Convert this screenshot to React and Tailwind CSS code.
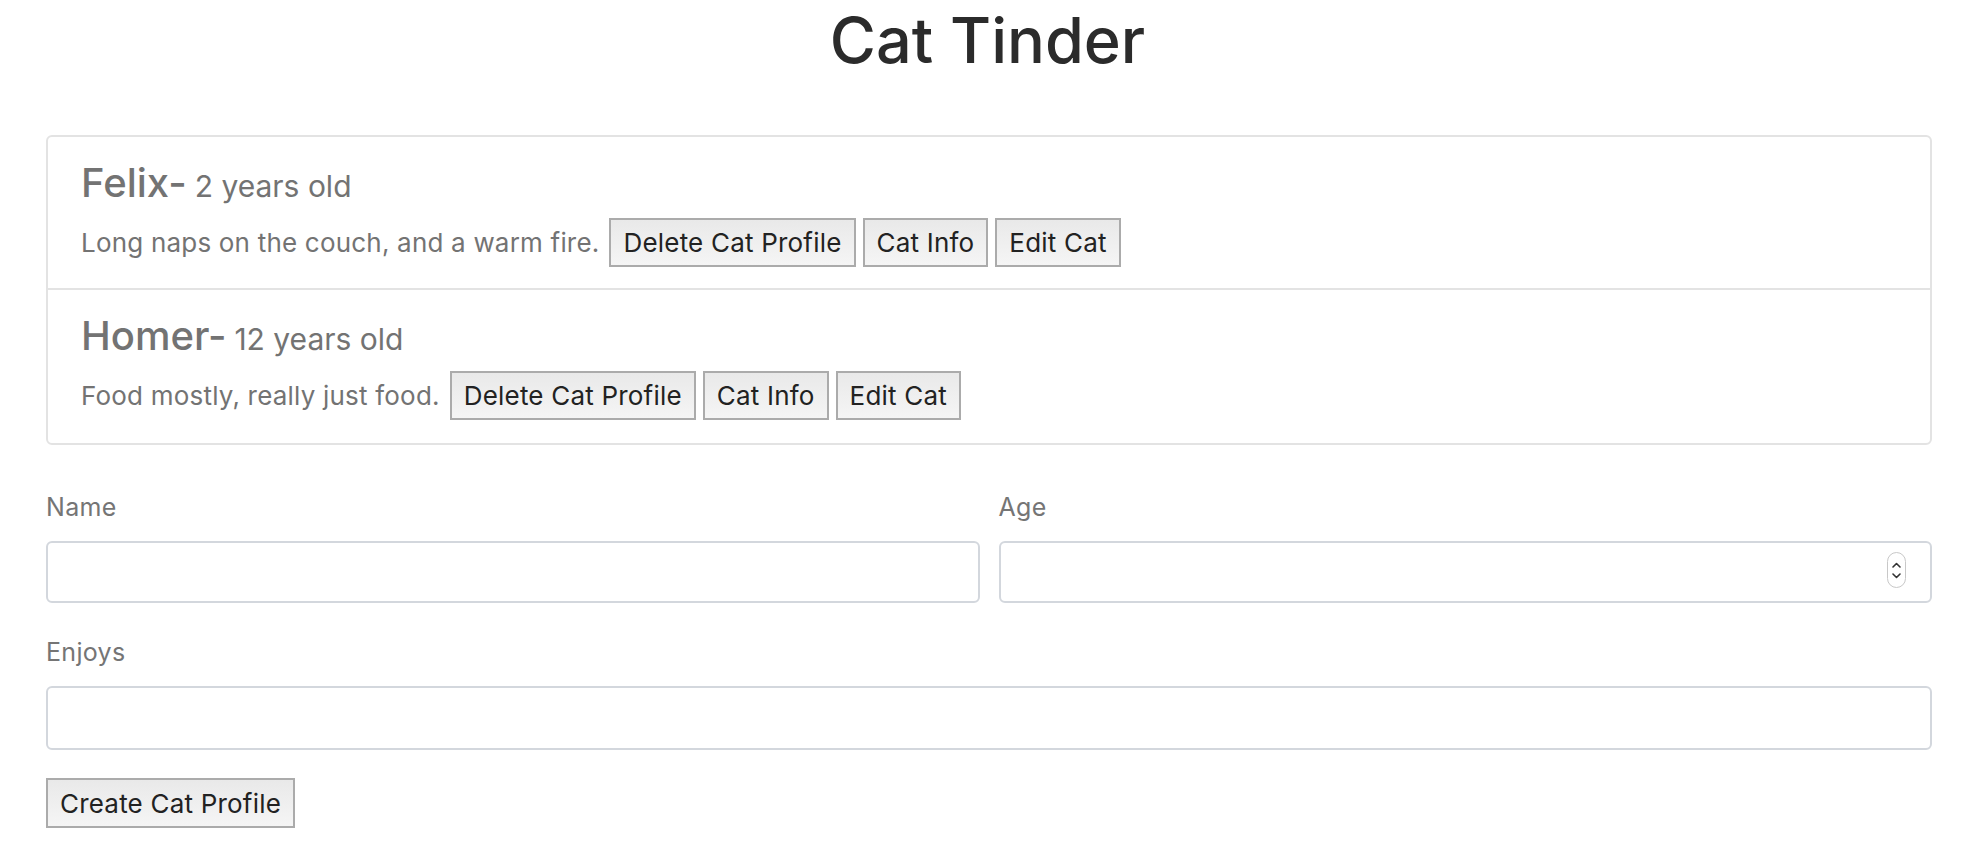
import { useState } from 'react'

const CATS = [
  { id: 1, name: 'Felix', age: 2, enjoys: 'Long naps on the couch, and a warm fire.' },
  { id: 2, name: 'Homer', age: 12, enjoys: 'Food mostly, really just food.' },
]

function CatButton({ children, className = '' }) {
  return (
    <button
      type="button"
      className={`h-[49px] px-[12px] whitespace-nowrap border-2 border-[#ababab] bg-linear-to-b from-[#e9e9e9] to-[#f5f5f5] text-[26px] leading-[31px] tracking-[0.2px] text-[#222] ${className}`}
    >
      {children}
    </button>
  )
}

function Field({ label, children, className = '' }) {
  return (
    <div className={className}>
      <label className="block text-[25px] leading-[36px] tracking-[0.3px] text-[#757575] mb-[16px]">{label}</label>
      {children}
    </div>
  )
}

export default function App() {
  const [form, setForm] = useState({ name: '', age: '', enjoys: '' })
  const update = (key) => (e) => setForm({ ...form, [key]: e.target.value })

  return (
    <div className="min-h-screen bg-white pl-[46px] pr-[34px] font-['Inter','Liberation_Sans',sans-serif]">
      <h1 className="pt-[2px] pr-[3px] text-center text-[63px] leading-[77px] font-medium text-[#2b2b2b]">
        Cat Tinder
      </h1>

      {/* Lista de gatos */}
      <ul className="mt-[56px] border-2 border-[#e3e3e3] rounded-[6px]">
        {CATS.map((cat, i) => (
          <li
            key={cat.id}
            className={`px-[33px] pt-[22px] ${i > 0 ? 'border-t-2 border-[#e3e3e3] pb-[23px]' : 'pb-[21px]'}`}
          >
            <h3 className="text-[40px] leading-[48px] font-medium text-[#737373]">
              {cat.name}-<small className="ml-[8px] text-[30px] font-normal">{cat.age} years old</small>
            </h3>
            <div className="mt-[8px] flex items-baseline">
              <span className="text-[26px] tracking-[0.2px] text-[#737373]">{cat.enjoys}</span>
              <CatButton className="ml-[10px]">Delete Cat Profile</CatButton>
              <CatButton className="ml-[7px]">Cat Info</CatButton>
              <CatButton className="ml-[7px]">Edit Cat</CatButton>
            </div>
          </li>
        ))}
      </ul>

      {/* Formulario */}
      <form className="mt-[44px]" onSubmit={(e) => e.preventDefault()}>
        <div className="grid grid-cols-2 gap-[19px]">
          <Field label="Name">
            <input
              value={form.name}
              onChange={update('name')}
              className="block w-full h-[62px] border-2 border-[#d3d7dd] rounded-[6px] px-[15px] text-[24px] outline-none"
            />
          </Field>
          <Field label="Age">
            <div className="relative">
              <input
                value={form.age}
                onChange={update('age')}
                className="block w-full h-[62px] border-2 border-[#d3d7dd] rounded-[6px] px-[15px] text-[24px] outline-none"
              />
              <div className="absolute right-[26px] top-[11px] w-[19px] h-[36px] rounded-full border border-[#c8c8c8] flex flex-col items-center justify-center gap-[5px]">
                <svg width="9" height="6" viewBox="0 0 9 6" fill="none">
                  <path d="M1 5 L4.5 1.5 L8 5" stroke="#333" strokeWidth="1.6" strokeLinecap="round" strokeLinejoin="round" />
                </svg>
                <svg width="9" height="6" viewBox="0 0 9 6" fill="none">
                  <path d="M1 1 L4.5 4.5 L8 1" stroke="#333" strokeWidth="1.6" strokeLinecap="round" strokeLinejoin="round" />
                </svg>
              </div>
            </div>
          </Field>
        </div>

        <Field label="Enjoys" className="mt-[31px]">
          <input
            value={form.enjoys}
            onChange={update('enjoys')}
            className="block w-full h-[64px] border-2 border-[#d3d7dd] rounded-[6px] px-[15px] text-[24px] outline-none"
          />
        </Field>

        <CatButton className="mt-[28px] h-[50px]">Create Cat Profile</CatButton>
      </form>
    </div>
  )
}
